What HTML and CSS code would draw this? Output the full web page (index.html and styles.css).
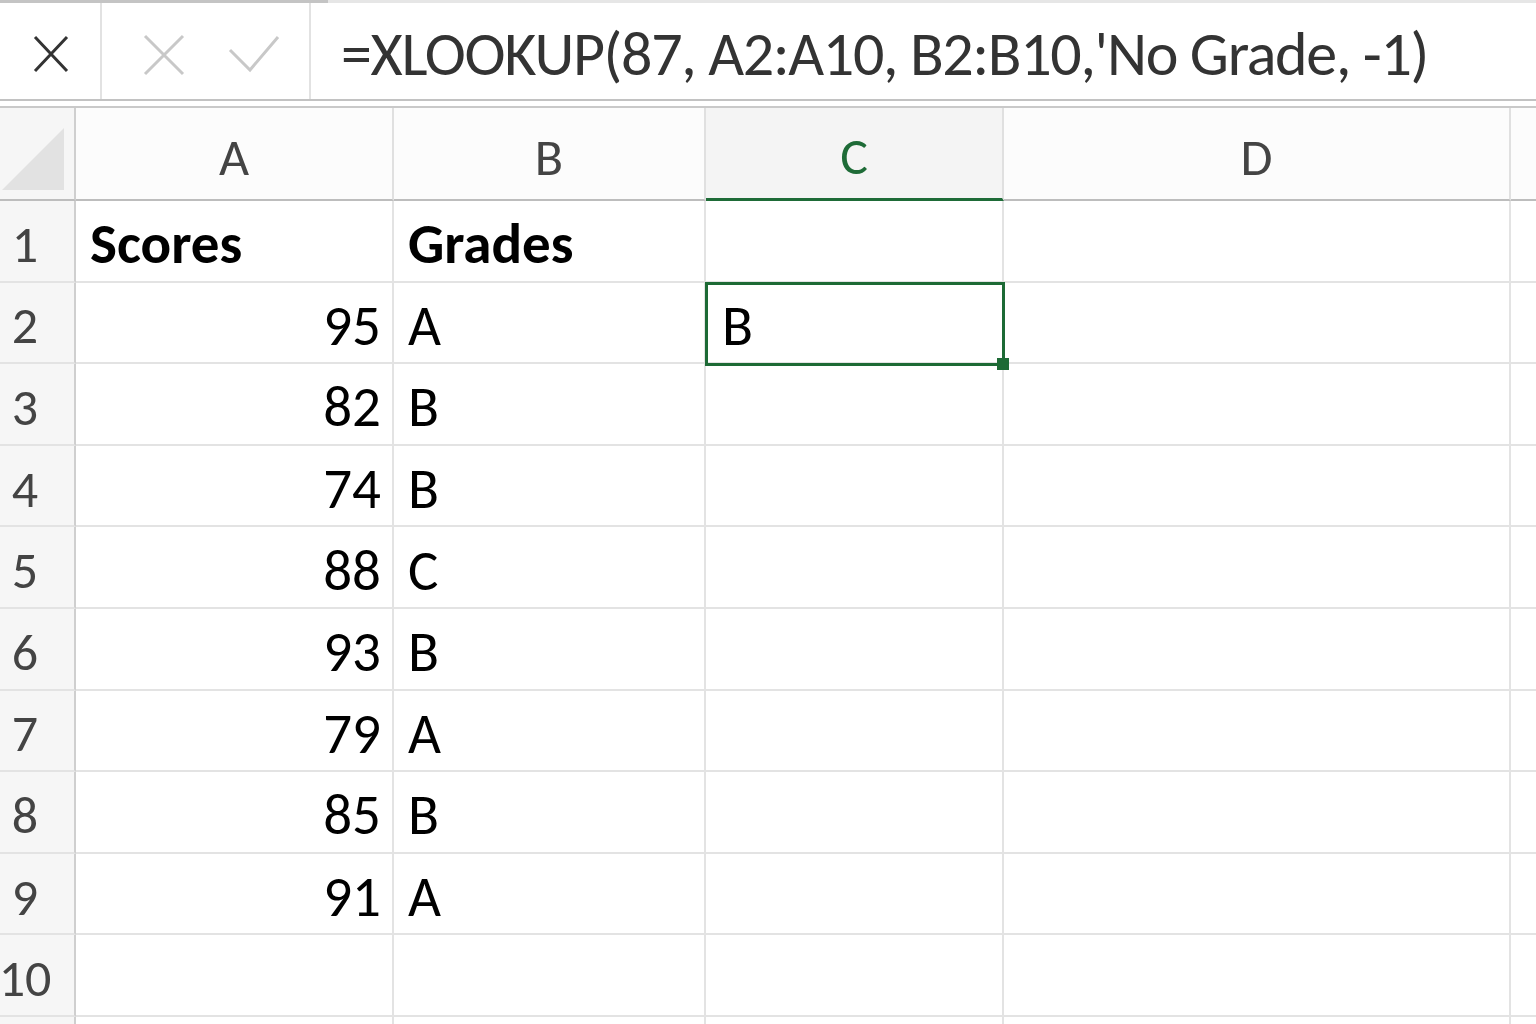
FILE: index.html
```html
<!doctype html>
<html>
<head>
    <meta charset="utf-8">
    <title>XLOOKUP</title>
    <link rel="stylesheet" href="styles.css">
</head>
<body>
    <div class="app">
        <div class="top_strip"></div>
        <div class="formula_bar">
            <div class="name_box">
                <svg width="100" height="96" viewBox="0 0 100 96">
                    <path d="M35 34 L67 68 M67 34 L35 68" stroke="#333" stroke-width="3" fill="none"/>
                </svg>
            </div>
            <div class="buttons">
                <svg width="207" height="96" viewBox="0 0 207 96">
                    <path d="M43 33 L81 71 M81 33 L43 71" stroke="#c8c8c8" stroke-width="3" fill="none"/>
                    <path d="M128 47 L148 67 L176 34" stroke="#c8c8c8" stroke-width="3" fill="none"/>
                </svg>
            </div>
            <div class="formula">=XLOOKUP(87, A2:A10, B2:B10,'No Grade, -1)</div>
        </div>

        <div class="sheet">
            <div class="corner"><div class="triangle"></div></div>
            <div class="col_head">A</div>
            <div class="col_head">B</div>
            <div class="col_head selected">C</div>
            <div class="col_head">D</div>
            <div class="col_head last"></div>

            <div class="row_head">1</div>
            <div class="cell bold">Scores</div>
            <div class="cell bold">Grades</div>
            <div class="cell"></div>
            <div class="cell"></div>
            <div class="cell last"></div>

            <div class="row_head">2</div>
            <div class="cell num">95</div>
            <div class="cell">A</div>
            <div class="cell active">B</div>
            <div class="cell"></div>
            <div class="cell last"></div>

            <div class="row_head">3</div>
            <div class="cell num">82</div>
            <div class="cell">B</div>
            <div class="cell"></div>
            <div class="cell"></div>
            <div class="cell last"></div>

            <div class="row_head">4</div>
            <div class="cell num">74</div>
            <div class="cell">B</div>
            <div class="cell"></div>
            <div class="cell"></div>
            <div class="cell last"></div>

            <div class="row_head">5</div>
            <div class="cell num">88</div>
            <div class="cell">C</div>
            <div class="cell"></div>
            <div class="cell"></div>
            <div class="cell last"></div>

            <div class="row_head">6</div>
            <div class="cell num">93</div>
            <div class="cell">B</div>
            <div class="cell"></div>
            <div class="cell"></div>
            <div class="cell last"></div>

            <div class="row_head">7</div>
            <div class="cell num">79</div>
            <div class="cell">A</div>
            <div class="cell"></div>
            <div class="cell"></div>
            <div class="cell last"></div>

            <div class="row_head">8</div>
            <div class="cell num">85</div>
            <div class="cell">B</div>
            <div class="cell"></div>
            <div class="cell"></div>
            <div class="cell last"></div>

            <div class="row_head">9</div>
            <div class="cell num">91</div>
            <div class="cell">A</div>
            <div class="cell"></div>
            <div class="cell"></div>
            <div class="cell last"></div>

            <div class="row_head">10</div>
            <div class="cell"></div>
            <div class="cell"></div>
            <div class="cell"></div>
            <div class="cell"></div>
            <div class="cell last"></div>

            <div class="row_head"></div>
            <div class="cell"></div>
            <div class="cell"></div>
            <div class="cell"></div>
            <div class="cell"></div>
            <div class="cell last"></div>
        </div>
    </div>
</body>
</html>
```
FILE: styles.css
```css
body{
    margin: 0;
    background-color: #fff;
    font-family: "Carlito", "Liberation Sans", sans-serif;
    overflow: hidden;
}
.app{
    display: flex;
    flex-direction: column;
    width: 1536px;
    height: 1024px;
    overflow: hidden;
}
.app > *{
    flex-shrink: 0;
}

/* formula bar */
.top_strip{
    height: 3px;
    background: linear-gradient(to right, #c4c4c4 328px, #e6e6e6 328px);
}
.formula_bar{
    display: flex;
    height: 96px;
    border-bottom: 2px solid #c2c2c2;
    margin-bottom: 5px;
}
.name_box{
    width: 100px;
    border-right: 2px solid #e2e2e2;
    flex-shrink: 0;
}
.buttons{
    width: 207px;
    border-right: 2px solid #e2e2e2;
    flex-shrink: 0;
}
.name_box svg, .buttons svg{
    display: block;
}
.formula{
    display: flex;
    align-items: center;
    padding-left: 30px;
    padding-top: 6px;
    font-size: 62px;
    letter-spacing: -1.3px;
    color: #333;
    white-space: nowrap;
}

/* sheet */
.sheet{
    display: grid;
    grid-template-columns: 76px 318px 312px 298px 507px 1fr;
    grid-template-rows: 93px repeat(11, 81.6px);
    border-top: 2px solid #c9c9c9;
}
.corner{
    background-color: #f6f6f6;
    border-right: 2px solid #cfcfcf;
    border-bottom: 2px solid #bdbdbd;
    position: relative;
}
.corner .triangle{
    position: absolute;
    left: 2px;
    top: 20px;
    width: 0;
    height: 0;
    border-left: 62px solid transparent;
    border-bottom: 62px solid #e2e2e2;
}
.col_head{
    display: flex;
    align-items: center;
    justify-content: center;
    padding-top: 6px;
    background-color: #fcfcfc;
    border-right: 2px solid #e0e0e0;
    border-bottom: 2px solid #bdbdbd;
    font-size: 52px;
    color: #444;
    box-sizing: border-box;
}
.col_head.selected{
    background-color: #f4f4f4;
    color: #1e6b37;
    border-bottom: 3px solid #1e6b37;
}
.row_head{
    display: flex;
    align-items: center;
    justify-content: center;
    padding-right: 24px;
    padding-top: 6px;
    background-color: #f6f6f6;
    border-right: 2px solid #cfcfcf;
    border-bottom: 2px solid #e3e3e3;
    font-size: 52px;
    color: #444;
    box-sizing: border-box;
}
.cell{
    display: flex;
    align-items: center;
    padding: 6px 0 0 14px;
    border-right: 2px solid #e3e3e3;
    border-bottom: 2px solid #e3e3e3;
    font-size: 57px;
    color: #000;
    box-sizing: border-box;
    white-space: nowrap;
}
.last{
    border-right: none;
}
.cell.bold{
    font-weight: bold;
}
.cell.num{
    justify-content: flex-end;
    padding-left: 0;
    padding-right: 11px;
}
.cell.active{
    position: relative;
    z-index: 2;
    padding-left: 16px;
}
.cell.active::before{
    content: "";
    position: absolute;
    left: -1px;
    top: -1px;
    right: -3px;
    bottom: -4px;
    border: 3px solid #1d6a35;
}
.cell.active::after{
    content: "";
    position: absolute;
    right: -7px;
    bottom: -8px;
    width: 12px;
    height: 12px;
    background-color: #1d6a35;
}
```
